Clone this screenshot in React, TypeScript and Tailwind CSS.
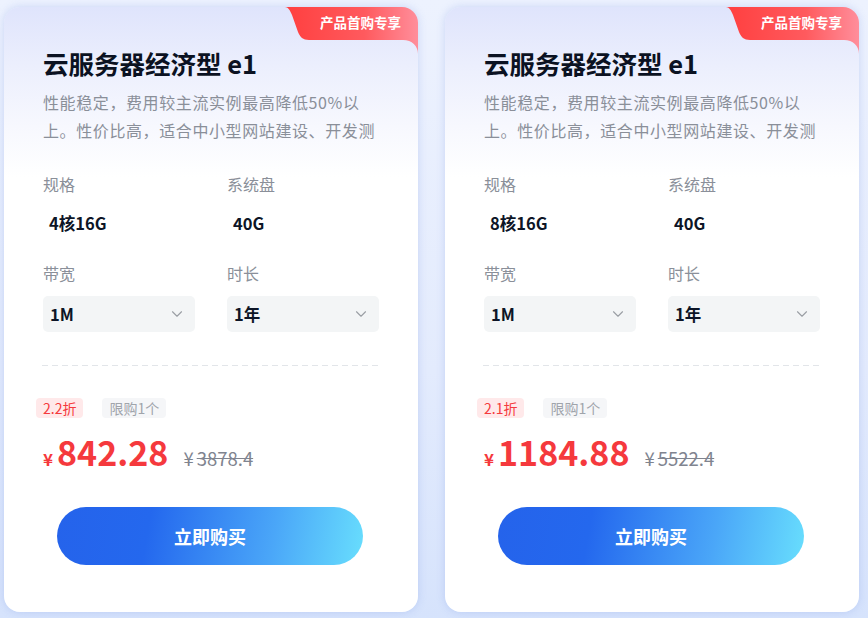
import { ChevronDown } from 'lucide-react';

interface PlanProps {
    spec: string;
    discount: string;
    price: string;
    original: string;
}

const font = "font-['Noto_Sans_CJK_SC','Noto_Sans',sans-serif]";

function Badge() {
    return (
        <div className="absolute top-0 right-0 w-[133px] h-[48px]">
            <svg width="133" height="48" viewBox="0 0 133 48" className="absolute inset-0">
                <defs>
                    <linearGradient id="badgeGrad" x1="0" y1="0" x2="1" y2="0">
                        <stop offset="0%" stopColor="#ff3f3f" />
                        <stop offset="60%" stopColor="#ff5a5e" />
                        <stop offset="100%" stopColor="#ff8e9b" />
                    </linearGradient>
                </defs>
                <path
                    d="M0 0 H133 V47 C133 39 127 33 118 33 H24 C18 33 15 30 13 25 L7 8 C5 3 3 0 0 0 Z"
                    fill="url(#badgeGrad)"
                />
            </svg>
            <span className="absolute left-[18px] right-[0px] top-[6px] text-center text-[13.5px] leading-[18px] font-bold text-white">
                产品首购专享
            </span>
        </div>
    );
}

function Select({ value }: { value: string }) {
    return (
        <div className="h-9 rounded-[5px] bg-[#f3f5f6] flex items-center justify-between pl-[7px] pr-[9px]">
            <span className="text-[16.5px] font-bold text-[#0d1526]">{value}</span>
            <ChevronDown size={18} strokeWidth={1.5} className="text-[#9a9ea4]" />
        </div>
    );
}

function PlanCard({ spec, discount, price, original }: PlanProps) {
    return (
        <div className="relative w-[414px] h-[605px] shrink-0 rounded-[16px] overflow-hidden bg-[linear-gradient(180deg,#dfe4fc_0px,#eceffd_60px,#f7f8fe_120px,#ffffff_170px)] shadow-[0_0_8px_rgba(120,150,225,0.3)] px-[39px] pt-[40px]">
            <Badge />
            <h3 className="text-[25.5px] leading-[32px] font-bold text-[#0b1222]">云服务器经济型 e1</h3>
            <div className="mt-[9px] text-[16px] leading-[28px] tracking-[0.6px] text-[#8a8f99]">
                <p className="whitespace-nowrap">性能稳定，费用较主流实例最高降低50%以</p>
                <p className="whitespace-nowrap">上。性价比高，适合中小型网站建设、开发测</p>
            </div>

            <div className="mt-[28px] grid grid-cols-2 gap-x-8 w-[336px]">
                <div>
                    <p className="text-[16px] leading-6 text-[#8a8f99]">规格</p>
                    <p className="mt-[15px] pl-[6px] text-[16.5px] leading-6 font-bold text-[#0d1526]">{spec}</p>
                </div>
                <div>
                    <p className="text-[16px] leading-6 text-[#8a8f99]">系统盘</p>
                    <p className="mt-[15px] pl-[6px] text-[16.5px] leading-6 font-bold text-[#0d1526]">40G</p>
                </div>
                <div className="mt-[26px]">
                    <p className="text-[16px] leading-6 text-[#8a8f99]">带宽</p>
                    <div className="mt-[11px]">
                        <Select value="1M" />
                    </div>
                </div>
                <div className="mt-[26px]">
                    <p className="text-[16px] leading-6 text-[#8a8f99]">时长</p>
                    <div className="mt-[11px]">
                        <Select value="1年" />
                    </div>
                </div>
            </div>

            <div className="mt-[33px] h-px w-[337px] -ml-px bg-[repeating-linear-gradient(90deg,#e2e5e9_0px,#e2e5e9_6px,transparent_6px,transparent_10px)]" />

            <div className="mt-[32px] -ml-[7px] flex gap-[19px]">
                <span className="h-5 px-[7px] rounded-[4px] bg-[#ffe9ea] text-[14px] leading-5 text-[#f5393d]">{discount}</span>
                <span className="h-5 px-[7px] rounded-[4px] bg-[#f5f6f8] text-[14px] leading-5 text-[#a0a4ab]">限购1个</span>
            </div>

            <div className="mt-[14px] h-10 flex items-baseline">
                <span className="text-[17px] font-bold text-[#f5393d] mr-[4px]">¥</span>
                <span className="text-[34px] leading-10 font-bold text-[#f5393d]">{price}</span>
                <span className="ml-[15px] text-[18.5px] text-[#80848f]">¥</span>
                <span className="ml-[3px] text-[18.5px] text-[#80848f] line-through">{original}</span>
            </div>

            <button className="mt-[35px] ml-[14px] w-[306px] h-[58px] rounded-full bg-[linear-gradient(100deg,#2563eb_0%,#2468ee_30%,#4aa6f8_70%,#68defd_100%)] text-white text-[18px] font-bold">
                立即购买
            </button>
        </div>
    );
}

export default function App() {
    return (
        <div className={`${font} w-[868px] h-[618px] overflow-hidden bg-[linear-gradient(180deg,#edf2fe_0%,#e3ebfd_60%,#d6e3fc_100%)] flex gap-[27px] pl-[4px] pt-[7px]`}>
            <PlanCard spec="4核16G" discount="2.2折" price="842.28" original="3878.4" />
            <PlanCard spec="8核16G" discount="2.1折" price="1184.88" original="5522.4" />
        </div>
    );
}
